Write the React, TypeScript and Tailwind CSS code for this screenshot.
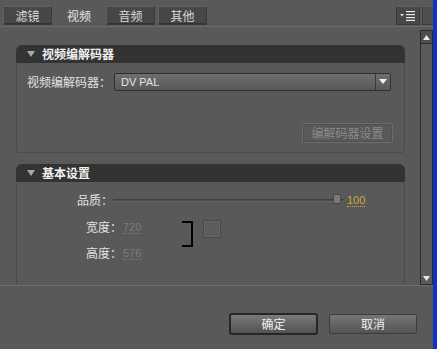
import React from "react";

const font = "font-['Noto_Sans_CJK_SC','Noto_Sans',sans-serif]";

function Tab({ label, active }: { label: string; active?: boolean }) {
  if (active) {
    return (
      <div className="w-[48px] h-[19px] flex items-center justify-center text-[12px] text-[#e6e6e6]">
        {label}
      </div>
    );
  }
  return (
    <div className="w-[49px] h-[19px] flex items-center justify-center text-[12px] text-[#d8d8d8] bg-[#474747] border border-[#3a3a3a] border-t-[#606060] border-l-[#5e5e5e] shadow-[inset_0_-1px_0_#333]">
      {label}
    </div>
  );
}

function SectionHeader({ title }: { title: string }) {
  return (
    <div className="h-[18px] bg-[#333333] rounded-t-[6px] flex items-center pl-[11px] text-[12px] font-bold text-[#f0f0f0]">
      <svg width="8" height="6" viewBox="0 0 8 6" className="mr-[7px]">
        <path d="M0 0 L8 0 L4 6 Z" fill="#a8a8a8" />
      </svg>
      {title}
    </div>
  );
}

export default function App() {
  return (
    <div className={`w-[437px] h-[349px] flex bg-[#595959] overflow-hidden ${font}`}>
      <div className="w-[433px] h-full flex flex-col">
        {/* tab bar */}
        <div className="h-[27px] flex items-end border-b border-[#6c6c6c] relative">
          <div className="flex items-end gap-[3px] pl-[3px] pb-[1px]">
            <Tab label="滤镜" />
            <Tab label="视频" active />
            <Tab label="音频" />
            <Tab label="其他" />
          </div>
          <div className="ml-auto flex items-end pb-[1px] gap-[2px]">
            <div className="w-[24px] h-[19px] bg-[#474747] border border-[#3a3a3a] border-t-[#606060] flex items-center justify-center gap-[1px]">
              <svg width="16" height="10" viewBox="0 0 16 10">
                <path d="M0 3 L4 3 L2 5.5 Z" fill="#e0e0e0" />
                <rect x="6" y="0" width="9" height="1.2" fill="#e8e8e8" />
                <rect x="6" y="3" width="9" height="1.2" fill="#e8e8e8" />
                <rect x="6" y="6" width="9" height="1.2" fill="#e8e8e8" />
                <rect x="6" y="8.8" width="9" height="1.2" fill="#e8e8e8" />
              </svg>
            </div>
            <div className="w-[11px] h-[19px] bg-[#4e4e4e] border border-[#3a3a3a] border-t-[#606060] border-r-0" />
          </div>
        </div>

        {/* content area */}
        <div className="h-[258px] flex">
          <div className="flex-1 overflow-hidden pl-[16px] pr-[15px] pt-[18px]">
            {/* section 1 */}
            <div>
              <SectionHeader title="视频编解码器" />
              <div className="h-[90px] border border-t-0 border-[#4c4c4c] rounded-b-[4px] flex flex-col px-[10px] pt-[10px]">
                <div className="flex items-center h-[18px]">
                  <span className="text-[12px] text-[#e2e2e2] w-[87px]">视频编解码器：</span>
                  <div className="flex-1 h-[18px] mr-[3px] flex items-center rounded-[2px] border border-[#2e2e2e] bg-gradient-to-b from-[#6e6e6e] to-[#585858]">
                    <span className="flex-1 pl-[6px] text-[11px] text-[#e4e4e4] font-['Liberation_Sans',sans-serif]">DV PAL</span>
                    <div className="w-[15px] h-full border-l border-[#3a3a3a] flex items-center justify-center">
                      <svg width="8" height="6" viewBox="0 0 8 6">
                        <path d="M0 0 L8 0 L4 5 Z" fill="#eeeeee" />
                      </svg>
                    </div>
                  </div>
                </div>
                <div className="flex justify-end mt-[32px] pr-[1px]">
                  <div className="w-[91px] h-[20px] border border-[#6c6c6c] rounded-[2px] shadow-[inset_0_0_0_1px_#505050] flex items-center justify-center text-[12px] text-[#8a8a8a]">
                    编解码器设置
                  </div>
                </div>
              </div>
            </div>

            {/* section 2 */}
            <div className="mt-[11px]">
              <SectionHeader title="基本设置" />
              <div className="h-[140px] border border-t-0 border-[#4c4c4c] flex flex-col">
                <div className="flex items-center h-[18px] mt-[9px]">
                  <span className="text-[12px] text-[#e2e2e2] ml-[60px] w-[36px]">品质：</span>
                  <div className="relative w-[231px] h-[18px] flex items-center">
                    <div className="w-full h-[3px] bg-[#4c4c4c] border-t border-[#404040] border-b border-b-[#666]" />
                    <div className="absolute left-[220px] top-[3px] w-[8px] h-[10px] bg-[#7a7a7a] border border-[#444] rounded-[1px]" />
                  </div>
                  <span className="ml-[3px] text-[11px] text-[#d0a838] border-b border-dotted border-[#d0a838] leading-[12px] font-['Liberation_Sans',sans-serif]">100</span>
                </div>
                <div className="flex mt-[9px]">
                  <div className="flex flex-col">
                    <div className="flex items-center h-[18px]">
                      <span className="text-[12px] text-[#e2e2e2] ml-[69px] w-[37px]">宽度：</span>
                      <span className="text-[11px] text-[#7c7c7c] border-b border-dotted border-[#7c7c7c] leading-[12px] font-['Liberation_Sans',sans-serif]">720</span>
                    </div>
                    <div className="flex items-center h-[18px] mt-[8px]">
                      <span className="text-[12px] text-[#e2e2e2] ml-[69px] w-[37px]">高度：</span>
                      <span className="text-[11px] text-[#7c7c7c] border-b border-dotted border-[#7c7c7c] leading-[12px] font-['Liberation_Sans',sans-serif]">576</span>
                    </div>
                  </div>
                  <div className="ml-[41px] mt-[3px] w-[11px] h-[26px] border-2 border-l-0 border-black" />
                  <div className="ml-[10px] mt-[2px] w-[18px] h-[18px] border border-[#4a4a4a] bg-[#5c5c5c] shadow-[inset_0_0_0_1px_#666]" />
                </div>
                <div className="flex items-start mt-[27px] h-[18px]">
                  <span className="text-[12px] leading-[14px] text-[#e2e2e2] ml-[50px] w-[47px] whitespace-nowrap">像素长宽比：</span>
                  <div className="flex-1 h-[18px] -mt-[2px] border border-[#3a3a3a] mr-[10px] bg-[#5e5e5e]" />
                </div>
              </div>
            </div>
          </div>

          {/* scrollbar */}
          <div className="w-[13px] mt-[3px] border border-[#2a2a2a] bg-[#5a5a5a] flex flex-col">
            <div className="h-[13px] flex items-center justify-center border-b border-[#2a2a2a] bg-[#4e4e4e]">
              <svg width="7" height="5" viewBox="0 0 7 5">
                <path d="M0 5 L7 5 L3.5 0 Z" fill="#e8e8e8" />
              </svg>
            </div>
            <div className="flex-1 bg-[#5a5a5a]" />
            <div className="h-[11px] flex items-center justify-center">
              <svg width="7" height="5" viewBox="0 0 7 5">
                <path d="M0 0 L7 0 L3.5 5 Z" fill="#e8e8e8" />
              </svg>
            </div>
          </div>
        </div>

        {/* bottom bar */}
        <div className="flex-1 border-t border-[#6e6e6e] flex items-start justify-end pt-[27px] pr-[16px] gap-[11px]">
          <button className="w-[89px] h-[22px] rounded-[3px] border-2 border-[#262626] bg-gradient-to-b from-[#7a7a7a] to-[#525252] text-[12px] text-[#f0f0f0] flex items-center justify-center">
            确定
          </button>
          <button className="w-[88px] h-[20px] mt-[1px] rounded-[2px] border border-[#3c3c3c] bg-gradient-to-b from-[#767676] to-[#545454] text-[12px] text-[#f0f0f0] flex items-center justify-center">
            取消
          </button>
        </div>
      </div>
      <div className="w-[4px] h-full bg-[#1030c8]" />
    </div>
  );
}
